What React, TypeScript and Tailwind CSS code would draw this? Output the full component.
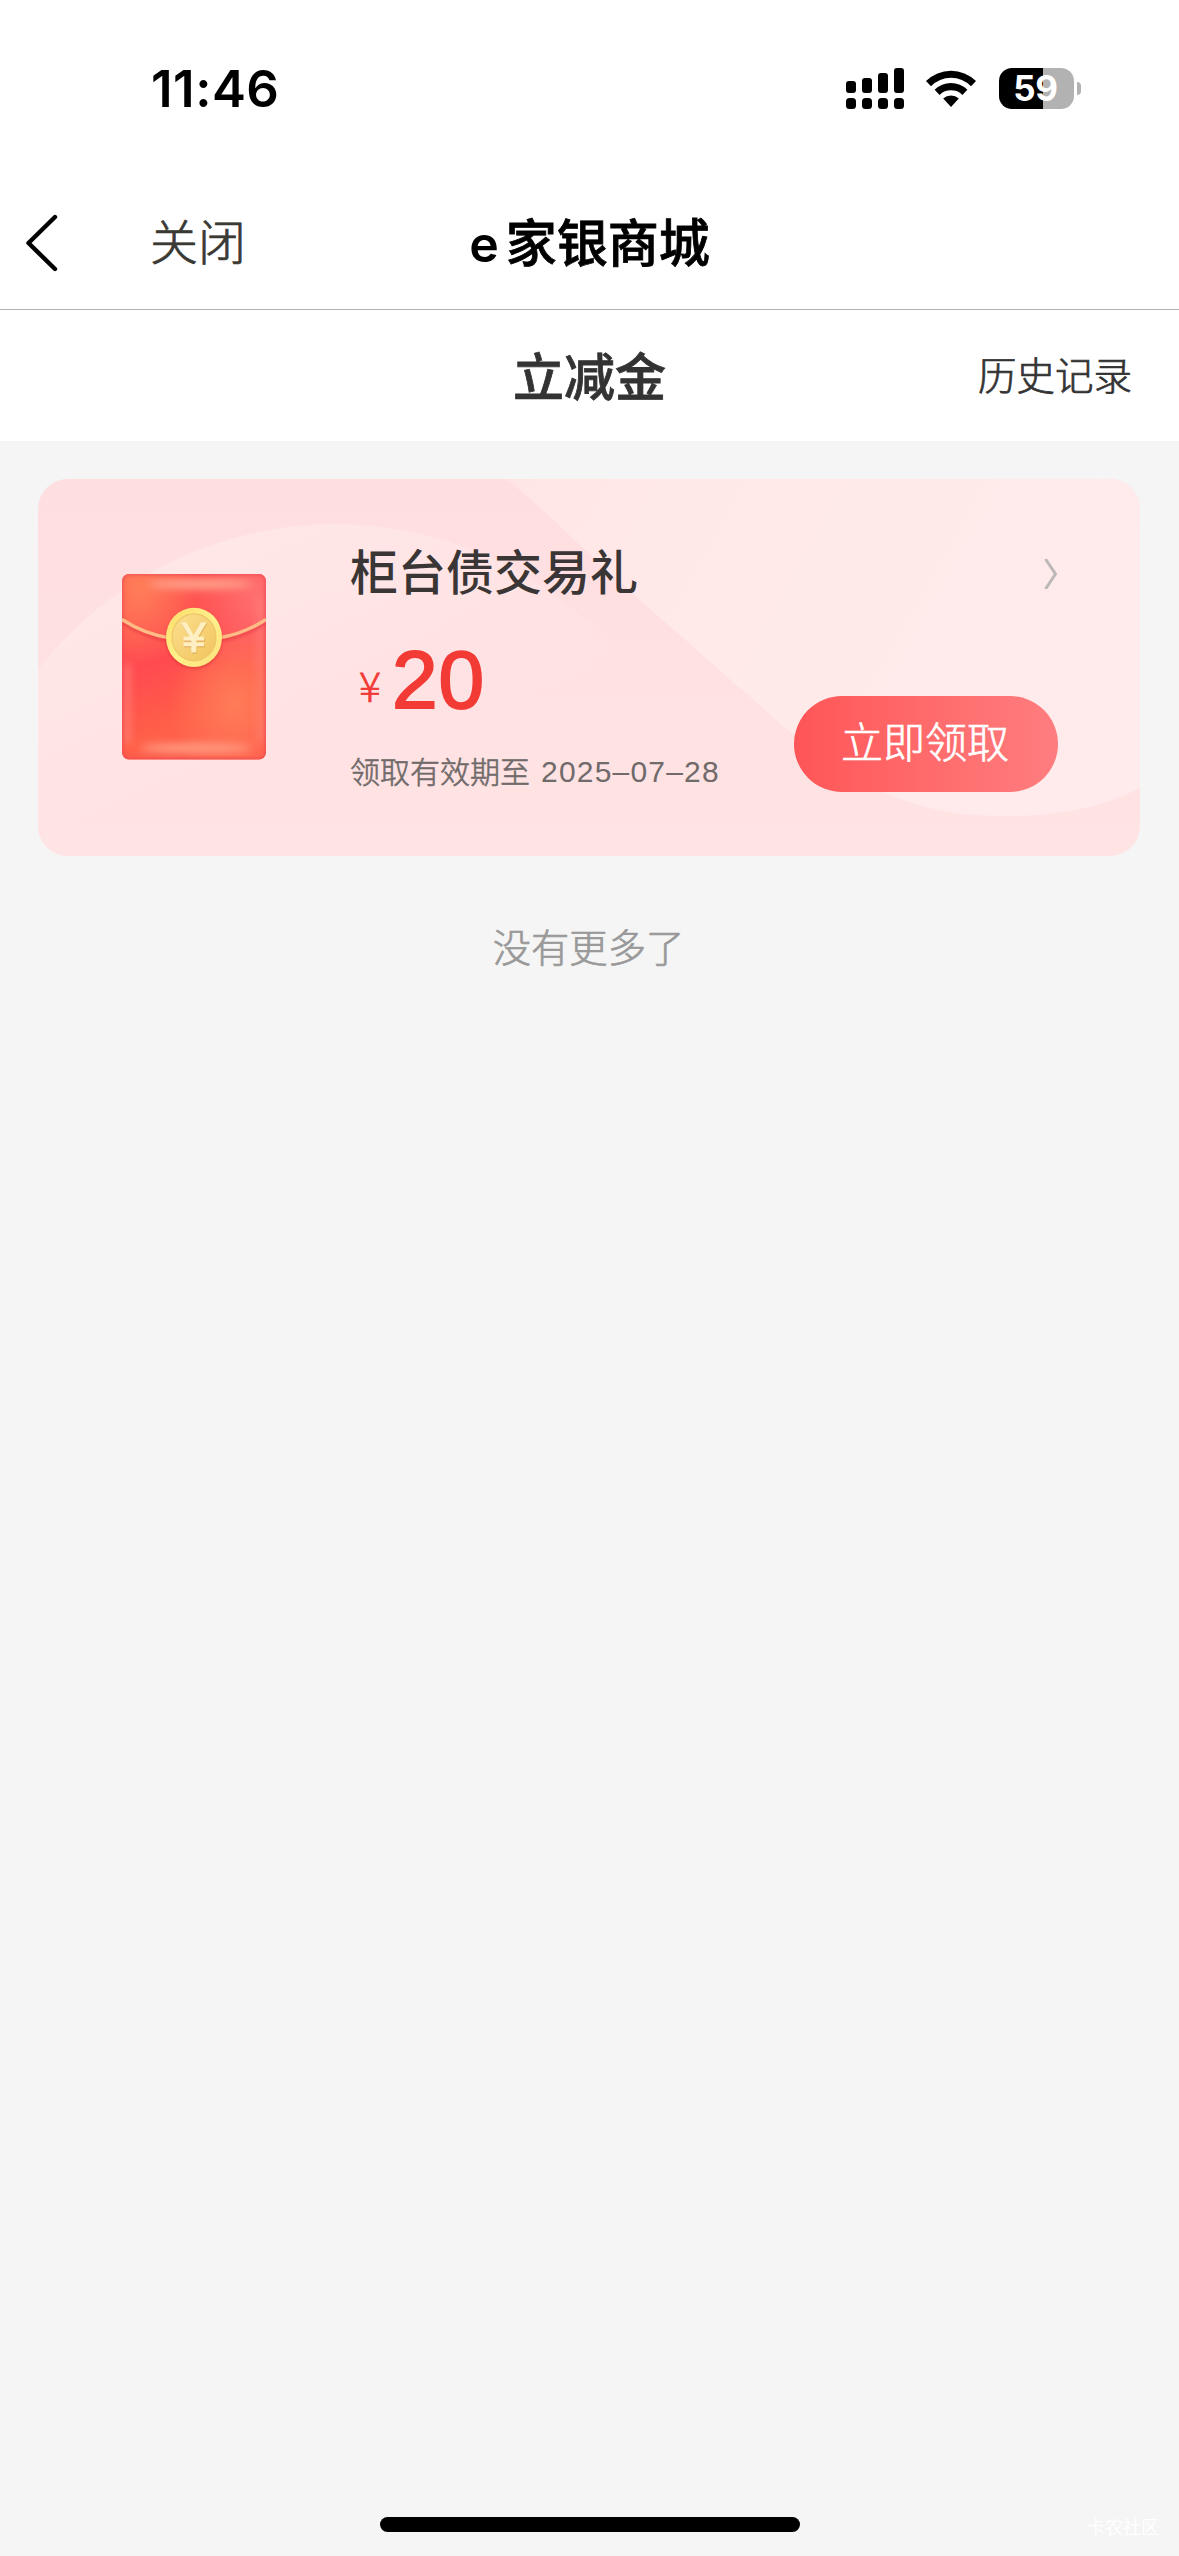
import React from "react";

const signal = [
  { x: 0, y: 13, h: 12 },
  { x: 16, y: 10, h: 15 },
  { x: 32, y: 5, h: 20 },
  { x: 48, y: 0, h: 25 },
];

function SignalIcon() {
  return (
    <svg width="58" height="41" viewBox="0 0 58 41">
      {signal.map((b) => (
        <g key={b.x}>
          <rect x={b.x} y={b.y} width="10" height={b.h} rx="3" />
          <rect x={b.x} y="30" width="10" height="11" rx="3.5" />
        </g>
      ))}
    </svg>
  );
}

function WifiIcon() {
  return (
    <svg width="50" height="37" viewBox="0 0 50 37">
      <path d="M0 11 A35.5 35.5 0 0 1 50 11 L45 16.2 A28 28 0 0 0 5 16.2 Z" />
      <path d="M8.6 19.7 A23.5 23.5 0 0 1 41.4 19.7 L36.4 24.9 A16 16 0 0 0 13.6 24.9 Z" />
      <path d="M17.2 28.6 A11.5 11.5 0 0 1 32.8 28.6 L25 37 Z" />
    </svg>
  );
}

function Battery() {
  return (
    <div className="flex items-center gap-[3px]">
      <div className="flex h-[41px] w-[75px] items-center justify-center rounded-[13px] bg-[linear-gradient(90deg,#000_44px,#b2b2b2_44px)] pr-[2px]">
        <span className="font-['Inter'] text-[35px] font-bold leading-none tracking-[-0.2px] text-white">59</span>
      </div>
      <div className="h-[13px] w-[4px] rounded-r-full bg-[#b2b2b2]" />
    </div>
  );
}

function CardBackground() {
  return (
    <svg className="absolute inset-0 h-full w-full" viewBox="0 0 1102 377" preserveAspectRatio="none">
      <defs>
        <linearGradient id="base" x1="0" y1="0" x2="0" y2="1">
          <stop offset="0" stopColor="#ffdee0" />
          <stop offset="1" stopColor="#ffe4e4" />
        </linearGradient>
        <linearGradient id="circle" gradientUnits="userSpaceOnUse" x1="200" y1="45" x2="330" y2="330">
          <stop offset="0" stopColor="#ffe7e7" />
          <stop offset="0.5" stopColor="#ffe4e5" />
          <stop offset="1" stopColor="#ffe3e4" stopOpacity="0" />
        </linearGradient>
        <linearGradient id="blob" x1="0" y1="0" x2="1" y2="0.3">
          <stop offset="0" stopColor="#ffe6e5" />
          <stop offset="0.4" stopColor="#ffeae9" />
          <stop offset="1" stopColor="#ffebeb" />
        </linearGradient>
      </defs>
      <rect width="1102" height="377" fill="url(#base)" />
      <circle cx="297" cy="420" r="375" fill="url(#circle)" />
      <path
        d="M468 0 C500 24 552 77 602 121 C650 163 680 190 710 216 C750 252 790 287 845 313 C890 333 930 337 972 337 C1020 337 1065 328 1102 309 V0 Z"
        fill="url(#blob)"
      />
    </svg>
  );
}

function RedEnvelope() {
  return (
    <svg className="mt-[95px] shrink-0" width="144" height="186" viewBox="0 0 144 186">
      <defs>
        <linearGradient id="body" x1="0.2" y1="0" x2="0.5" y2="1">
          <stop offset="0" stopColor="#ff5a50" />
          <stop offset="0.45" stopColor="#ff4b50" />
          <stop offset="0.8" stopColor="#ff6048" />
          <stop offset="1" stopColor="#ff5c4c" />
        </linearGradient>
        <radialGradient id="glowLeft" cx="0.12" cy="0.08" r="0.4">
          <stop offset="0" stopColor="#ff7e58" />
          <stop offset="1" stopColor="#ff7e58" stopOpacity="0" />
        </radialGradient>
        <radialGradient id="glowTop" cx="0.95" cy="0.12" r="0.45">
          <stop offset="0" stopColor="#ff7072" />
          <stop offset="1" stopColor="#ff7072" stopOpacity="0" />
        </radialGradient>
        <radialGradient id="glowRight" cx="0.78" cy="0.7" r="0.45">
          <stop offset="0" stopColor="#ff7c58" />
          <stop offset="1" stopColor="#ff7c58" stopOpacity="0" />
        </radialGradient>
        <linearGradient id="coin" x1="0" y1="0" x2="1" y2="1">
          <stop offset="0" stopColor="#fbdf90" />
          <stop offset="1" stopColor="#f2c45c" />
        </linearGradient>
        <linearGradient id="rim" x1="0" y1="0" x2="1" y2="1">
          <stop offset="0" stopColor="#fbdc66" />
          <stop offset="0.5" stopColor="#fff08c" />
          <stop offset="1" stopColor="#fde07a" />
        </linearGradient>
        <filter id="soft" filterUnits="userSpaceOnUse" x="-30" y="-30" width="204" height="246">
          <feGaussianBlur stdDeviation="4" />
        </filter>
        <filter id="shade" filterUnits="userSpaceOnUse" x="-30" y="-30" width="204" height="246">
          <feGaussianBlur stdDeviation="1.4" />
        </filter>
        <clipPath id="envelope">
          <rect width="144" height="185.5" rx="7" />
        </clipPath>
      </defs>
      <g clipPath="url(#envelope)">
        <rect width="144" height="186" fill="url(#body)" />
        <rect width="144" height="186" fill="url(#glowLeft)" />
        <rect width="144" height="186" fill="url(#glowTop)" />
        <rect width="144" height="186" fill="url(#glowRight)" />
        <ellipse cx="78" cy="10" rx="52" ry="5" fill="#ffa68e" filter="url(#soft)" />
        <ellipse cx="74" cy="174" rx="56" ry="5" fill="#ff9c82" filter="url(#soft)" />
        <rect x="2" y="90" width="6" height="80" fill="#ff8a80" opacity="0.8" filter="url(#soft)" />
        <rect x="136" y="25" width="5" height="145" fill="#ff8a80" opacity="0.7" filter="url(#soft)" />
        <rect width="144" height="185.5" rx="7" fill="none" stroke="#ea4250" strokeOpacity="0.6" strokeWidth="3.5" filter="url(#shade)" />
        <path d="M0 48.5 Q22 63 48 67 M96 67 Q122 63 144 48.5" fill="none" stroke="#e02f3c" strokeOpacity="0.6" strokeWidth="3" filter="url(#shade)" />
        <path d="M0 45.5 Q22 60 48 64 M96 64 Q122 60 144 45.5" fill="none" stroke="#ffbc86" strokeWidth="3.4" />
      </g>
      <ellipse cx="72" cy="65.5" rx="28" ry="29.6" fill="#d93030" opacity="0.6" filter="url(#shade)" />
      <ellipse cx="72" cy="63.3" rx="28" ry="29.6" fill="url(#rim)" />
      <ellipse cx="72" cy="63.3" rx="22" ry="23.5" fill="url(#coin)" stroke="#eec668" strokeWidth="1.2" />
      <text x="72.5" y="79" textAnchor="middle" fontFamily="Liberation Sans" fontSize="42" fill="#dda558" stroke="#dda558" strokeWidth="1.2">¥</text>
      <text x="72" y="77.5" textAnchor="middle" fontFamily="Liberation Sans" fontSize="42" fill="#fff0c4" stroke="#fff0c4" strokeWidth="1.2">¥</text>
    </svg>
  );
}

export default function App() {
  return (
    <div className="flex h-[2556px] w-[1179px] flex-col overflow-hidden bg-[#f5f5f5] font-['Noto_Sans_CJK_SC',sans-serif] text-[#333]">
      <header className="flex flex-col bg-white">
        <div className="flex h-[176px] items-center justify-between pl-[151px] pr-[98px]">
          <span className="font-['Inter'] text-[51px] font-semibold leading-none tracking-[0.5px] text-black">11:46</span>
          <div className="flex items-center">
            <SignalIcon />
            <span className="w-[22px]" />
            <WifiIcon />
            <span className="w-[23px]" />
            <Battery />
          </div>
        </div>
        <nav className="grid h-[134px] grid-cols-[1fr_auto_1fr] items-center border-b border-[#b2b2b2]">
          <div className="flex items-center">
            <svg className="ml-[25px]" width="34" height="58" viewBox="0 0 34 58" fill="none" stroke="#000" strokeWidth="4.4" strokeLinecap="round" strokeLinejoin="round">
              <path d="M30 3 L3.5 29 L30 55" />
            </svg>
            <span className="ml-[91px] pb-[7px] text-[48px] font-light leading-none text-[#3a3933] [-webkit-text-stroke:0.7px_#3a3933]">关闭</span>
          </div>
          <h1 className="flex items-baseline pb-[2px] text-[51px] font-medium leading-none text-black">
            <span className="mr-[7px] font-['Inter'] text-[50px] font-semibold">e</span>
            <span className="[-webkit-text-stroke:0.8px_#000]">家银商城</span>
          </h1>
          <span />
        </nav>
        <div className="grid h-[131px] grid-cols-[1fr_auto_1fr] items-center pr-[47px]">
          <span />
          <h2 className="ml-[47px] pb-[2px] text-[51px] font-medium leading-none [-webkit-text-stroke:0.8px_#333]">立减金</h2>
          <span className="justify-self-end pb-[5px] text-[38.5px] font-light leading-none [-webkit-text-stroke:0.7px_#333]">历史记录</span>
        </div>
      </header>

      <main className="flex flex-1 flex-col items-center pt-[38px]">
        <section className="relative mr-px h-[377px] w-[1102px] overflow-hidden rounded-[30px]">
          <CardBackground />
          <div className="relative flex h-full items-start pl-[84px] pr-[82px]">
            <RedEnvelope />
            <div className="ml-[84px] flex flex-col pt-[58px]">
              <h3 className="text-[48px] font-medium leading-[64px] text-[#3a3636]">柜台债交易礼</h3>
              <div className="mt-[39px] flex h-[80px] items-start pl-[9px] text-[#f33b36]">
                <span className="pt-[4px] text-[41px] font-light leading-[80px] [-webkit-text-stroke:0.7px_#f33b36]">¥</span>
                <span className="ml-[11px] font-['Liberation_Sans'] text-[82px] leading-[80px] tracking-[1px] [-webkit-text-stroke:2px_#f33b36]">20</span>
              </div>
              <p className="mt-[30px] flex items-start text-[30px] leading-[40px] text-[#706a6a]">
                <span className="font-light [-webkit-text-stroke:0.6px_#706a6a]">领取有效期至</span>
                <span className="ml-[11px] pt-[2px] font-['Liberation_Sans'] tracking-[1.2px]">2025–07–28</span>
              </p>
            </div>
            <div className="ml-auto flex flex-col items-end pt-[80px]">
              <svg width="14" height="30" viewBox="0 0 14 30" fill="none" stroke="#bdb8b8" strokeWidth="3">
                <path d="M1.5 0 L11.5 15 L1.5 30" />
              </svg>
              <button className="mt-[107px] flex h-[96px] w-[264px] items-center justify-center rounded-full bg-gradient-to-r from-[#ff5557] to-[#ff7d7f] pb-[8px] pr-[2px] text-[42px] font-light leading-none text-white [-webkit-text-stroke:0.7px_#fff]">
                立即领取
              </button>
            </div>
          </div>
        </section>
        <p className="-ml-[2px] mt-[69px] text-[38.3px] font-light leading-[42px] text-[#999] [-webkit-text-stroke:0.7px_#999]">没有更多了</p>
      </main>

      <footer className="relative flex h-[39px] justify-center">
        <div className="h-[15px] w-[420px] rounded-full bg-black" />
        <span className="absolute right-[20px] top-0 text-[18px] leading-[18px] text-white">卡农社区</span>
      </footer>
    </div>
  );
}
